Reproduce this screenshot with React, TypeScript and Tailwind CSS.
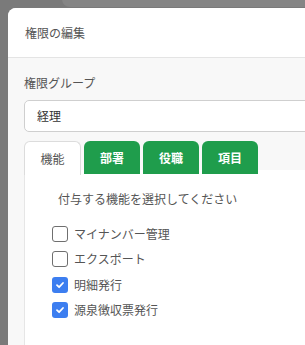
import React from "react";

const FEATURES = [
  { label: "マイナンバー管理", checked: false },
  { label: "エクスポート", checked: false },
  { label: "明細発行", checked: true },
  { label: "源泉徴収票発行", checked: true },
];

const TABS = ["部署", "役職", "項目"];

export default function App() {
  return (
    <div
      className="relative w-[305px] h-[345px] overflow-hidden bg-[#7a7a7a] pt-2 pl-2"
      style={{ fontFamily: '"Noto Sans CJK JP", "Noto Sans", sans-serif' }}
    >
      {/* card behind the overlay */}
      <div className="absolute left-[62px] top-[-20px] w-[300px] h-[27px] rounded-lg bg-[#858585]" />

      <div className="relative h-full rounded-tl-lg bg-[#f8f8f8] overflow-hidden">
        {/* Header */}
        <div className="h-[50px] bg-white border-b border-[#e4e4e4] px-[17px] flex items-center text-[12px] text-[#555]">
          権限の編集
        </div>

        {/* Body */}
        <div className="pl-4 pt-[15px]">
          <div className="text-[12px] leading-5 text-[#555]">権限グループ</div>
          <div className="mt-[7px] h-8 w-[320px] rounded-[5px] border border-[#cfcfcf] bg-white flex items-center pl-[12px] text-[12px] text-[#333]">
            経理
          </div>

          {/* Tabs */}
          <div className="relative z-10 mt-[9px] flex gap-[3px] h-[33px]">
            <div className="w-[57px] h-[34px] rounded-t-[6px] border border-b-0 border-[#dcdcdc] bg-white flex items-center justify-center text-[12px] text-[#555]">
              機能
            </div>
            {TABS.map((t) => (
              <div
                key={t}
                className="w-[56px] h-[33px] rounded-t-[6px] bg-[#1f9d4c] flex items-center justify-center text-[12px] font-bold text-white"
              >
                {t}
              </div>
            ))}
          </div>

          {/* Panel */}
          <div className="-mt-[4px] h-[200px] bg-white border-l border-[#e6e6e6] pl-[27px] pt-[19px]">
            <div className="pl-[6px] text-[12px] leading-5 text-[#555]">
              付与する機能を選択してください
            </div>
            <div className="mt-[12px] flex flex-col">
              {FEATURES.map((f) => (
                <div key={f.label} className="h-[25.5px] flex items-center gap-[6px]">
                  {f.checked ? (
                    <span className="w-4 h-4 rounded-[3px] bg-[#3c7ef0] flex items-center justify-center">
                      <svg width="10" height="10" viewBox="0 0 10 10" fill="none">
                        <path d="M2 5.2 L4.1 7.2 L8 3" stroke="white" strokeWidth="1.8" strokeLinecap="round" strokeLinejoin="round" />
                      </svg>
                    </span>
                  ) : (
                    <span className="w-4 h-4 rounded-[3px] border-[1.5px] border-[#6f6f6f] bg-white" />
                  )}
                  <span className="text-[12px] text-[#555]">{f.label}</span>
                </div>
              ))}
            </div>
          </div>
        </div>
      </div>
    </div>
  );
}
